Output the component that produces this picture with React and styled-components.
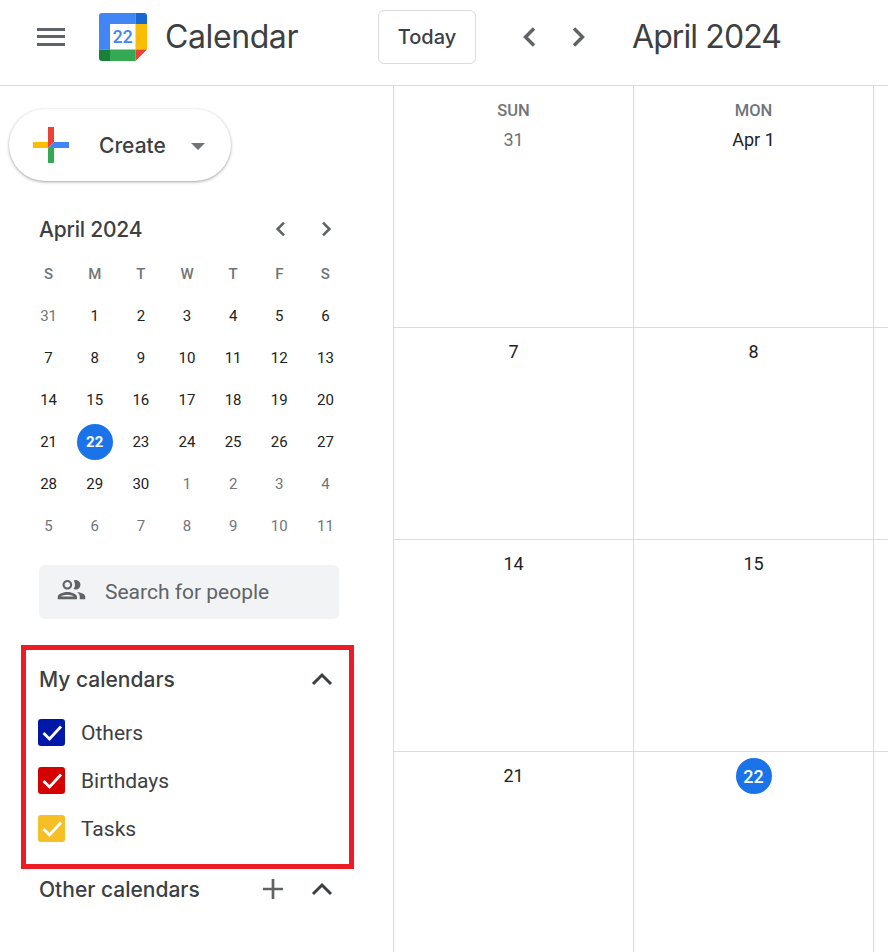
import React from "react";
import styled, { createGlobalStyle } from "styled-components";

const GlobalStyle = createGlobalStyle`
  html, body {
    margin: 0;
    padding: 0;
    background: #fff;
  }
  * {
    box-sizing: border-box;
  }
`;

const miniWeeks = [
  [[31, 1], [1], [2], [3], [4], [5], [6]],
  [[7], [8], [9], [10], [11], [12], [13]],
  [[14], [15], [16], [17], [18], [19], [20]],
  [[21], [22, 0, 1], [23], [24], [25], [26], [27]],
  [[28], [29], [30], [1, 1], [2, 1], [3, 1], [4, 1]],
  [[5, 1], [6, 1], [7, 1], [8, 1], [9, 1], [10, 1], [11, 1]]
];

const dayLetters = ["S", "M", "T", "W", "T", "F", "S"];

const calendars = [
  { name: "Others", color: "#0018a8" },
  { name: "Birthdays", color: "#d50000" },
  { name: "Tasks", color: "#f6bf26" }
];

const cells = [
  { label: "SUN", day: "31", muted: true },
  { label: "MON", day: "Apr 1" },
  {},
  { day: "7" },
  { day: "8" },
  {},
  { day: "14" },
  { day: "15" },
  {},
  { day: "21" },
  { day: "22", today: true },
  {}
];

const Logo = () => (
  <LogoSvg viewBox="0 0 48 48">
    <path d="M3 0h33.500v11H11v25.500H0V3a3 3 0 0 1 3-3z" fill="#4285f4" />
    <path d="M36.500 0H45a3 3 0 0 1 3 3v8H36.500z" fill="#1967d2" />
    <rect x="36.500" y="11" width="11.500" height="25.500" fill="#fbbc04" />
    <rect x="11" y="36.500" width="25.500" height="11.500" fill="#34a853" />
    <path d="M0 36.500h11V48H3a3 3 0 0 1-3-3z" fill="#188038" />
    <path d="M36.500 36.500H48L36.500 48z" fill="#ea4335" />
    <text x="23.700" y="29.500" textAnchor="middle" fontFamily="Roboto, sans-serif" fontSize="17.500" fontWeight="500" fill="#4285f4">22</text>
  </LogoSvg>
);

const Check = () => (
  <svg width="27" height="27" viewBox="0 0 27 27">
    <path d="M5.500 14l6 6L23 7.500" fill="none" stroke="#fff" strokeWidth="2.800" />
  </svg>
);

const UpChevron = () => (
  <svg width="22" height="14" viewBox="0 0 22 14">
    <path d="M2 12l9-9 9 9" fill="none" stroke="#3c4043" strokeWidth="3" />
  </svg>
);

// size is the height of the glyph, width follows
const SideChevron = ({ dir, size, weight }) => (
  <svg width={size} height={size} viewBox="0 0 24 24">
    <path
      d={dir === "left" ? "M16 3.500L7.500 12l8.500 8.500" : "M8 3.500L16.500 12 8 20.500"}
      fill="none"
      stroke="#5f6368"
      strokeWidth={weight}
    />
  </svg>
);

export default function App() {
  return (
    <Page>
      <GlobalStyle />
      <Header>
        <Burger>
          <span />
          <span />
          <span />
        </Burger>
        <Logo />
        <Brand>Calendar</Brand>
        <TodayButton>Today</TodayButton>
        <NavArrows>
          <SideChevron dir="left" size={24} weight={3.4} />
          <SideChevron dir="right" size={24} weight={3.4} />
        </NavArrows>
        <MonthTitle>April 2024</MonthTitle>
      </Header>
      <Body>
        <Sidebar>
          <CreateButton>
            <svg width="36" height="36" viewBox="0 0 36 36">
              <rect x="15" width="6" height="15" fill="#ea4335" />
              <rect x="21" y="15" width="15" height="6" fill="#4285f4" />
              <rect x="15" y="21" width="6" height="15" fill="#34a853" />
              <rect y="15" width="15" height="6" fill="#fbbc04" />
              <path d="M15 15h6l-6 6z" fill="#ea4335" />
              <path d="M21 15v6h-6z" fill="#4285f4" />
            </svg>
            <CreateLabel>Create</CreateLabel>
            <Caret />
          </CreateButton>
          <MiniHeader>
            <MiniTitle>April 2024</MiniTitle>
            <MiniArrows>
              <SideChevron dir="left" size={18} weight={3.4} />
              <SideChevron dir="right" size={18} weight={3.4} />
            </MiniArrows>
          </MiniHeader>
          <MiniGrid>
            {dayLetters.map((letter, i) => (
              <MiniLetter key={i}>{letter}</MiniLetter>
            ))}
            {miniWeeks.flat().map(([num, outside, selected], i) => (
              <MiniDay key={i} $outside={outside}>
                {selected ? <Selected>{num}</Selected> : num}
              </MiniDay>
            ))}
          </MiniGrid>
          <PeopleSearch>
            <PeopleIcon viewBox="0 0 24 24" fill="#5f6368">
              <path d="M9 12c1.930 0 3.500-1.570 3.500-3.500S10.930 5 9 5 5.500 6.570 5.500 8.500 7.070 12 9 12zm0-5.500c1.100 0 2 .9 2 2s-.9 2-2 2-2-.9-2-2 .9-2 2-2zM9 13.750c-2.340 0-7 1.170-7 3.500V19h14v-1.750c0-2.330-4.660-3.500-7-3.500zM4.340 17c.84-.58 2.870-1.250 4.660-1.250s3.820.67 4.660 1.250H4.340zM16.040 13.810c1.160.84 1.960 1.960 1.960 3.440V19h4v-1.750c0-2.020-3.500-3.170-5.960-3.440zM15 12c1.930 0 3.500-1.570 3.500-3.500S16.930 5 15 5c-.54 0-1.040.13-1.500.35.630.89 1 1.980 1 3.150s-.37 2.260-1 3.150c.46.22.96.35 1.500.35z" />
            </PeopleIcon>
            <PeopleText>Search for people</PeopleText>
          </PeopleSearch>
          <MyCalendars>
            <SectionHead>
              <SectionTitle>My calendars</SectionTitle>
              <UpChevron />
            </SectionHead>
            <CalendarList>
              {calendars.map(c => (
                <CalendarRow key={c.name}>
                  <CheckBox $color={c.color}>
                    <Check />
                  </CheckBox>
                  <CalendarName>{c.name}</CalendarName>
                </CalendarRow>
              ))}
            </CalendarList>
          </MyCalendars>
          <OtherHead>
            <SectionTitle>Other calendars</SectionTitle>
            <OtherActions>
              <svg width="24" height="24" viewBox="0 0 24 24">
                <path d="M12 2v20M2 12h20" stroke="#5f6368" strokeWidth="2.700" fill="none" />
              </svg>
              <UpChevron />
            </OtherActions>
          </OtherHead>
        </Sidebar>
        <Month>
          {cells.map((cell, i) => (
            <Cell key={i}>
              {cell.label && <DayLabel>{cell.label}</DayLabel>}
              {cell.today ? (
                <TodayCircle>{cell.day}</TodayCircle>
              ) : (
                cell.day && (
                  <DayNumber $muted={cell.muted} $top={!!cell.label}>
                    {cell.day}
                  </DayNumber>
                )
              )}
            </Cell>
          ))}
        </Month>
      </Body>
    </Page>
  );
}

const Page = styled.div`
  width: 888px;
  height: 952px;
  overflow: hidden;
  background: #fff;
  font-family: Roboto, "Liberation Sans", sans-serif;
  color: #3c4043;
`;

const Header = styled.header`
  height: 86px;
  display: flex;
  align-items: center;
  padding: 0 0 12px 37px;
  border-bottom: 1px solid #dadce0;
`;

const Burger = styled.div`
  width: 28px;
  height: 18px;
  margin-right: 34px;
  display: flex;
  flex-direction: column;
  justify-content: space-between;

  span {
    height: 3px;
    background: #5f6368;
  }
`;

const LogoSvg = styled.svg`
  width: 48px;
  height: 48px;
  flex: none;
  margin-right: 18px;
`;

const Brand = styled.div`
  width: 213px;
  font-family: Inter, sans-serif;
  font-size: 32px;
  font-weight: 400;
  letter-spacing: -0.4px;
  color: #3c4043;
`;

const TodayButton = styled.div`
  width: 98px;
  height: 54px;
  display: flex;
  align-items: center;
  justify-content: center;
  border: 1px solid #dadce0;
  border-radius: 6px;
  font-family: Inter, sans-serif;
  font-size: 20px;
  font-weight: 500;
  color: #3c4043;
`;

const NavArrows = styled.div`
  width: 72px;
  margin-left: 42px;
  display: flex;
  justify-content: space-between;
`;

const MonthTitle = styled.div`
  margin-left: 42px;
  font-family: Inter, sans-serif;
  font-size: 32px;
  font-weight: 400;
  letter-spacing: -0.9px;
  color: #3c4043;
`;

const Body = styled.div`
  display: flex;
`;

const Sidebar = styled.aside`
  width: 393px;
  flex: none;
  padding: 23px 0 0 9px;
`;

const CreateButton = styled.div`
  width: 222px;
  height: 72px;
  padding-left: 24px;
  display: flex;
  align-items: center;
  border-radius: 36px;
  background: #fff;
  box-shadow: 0 1px 3px 1px rgba(60, 64, 67, 0.15), 0 1px 2px rgba(60, 64, 67, 0.3);
`;

const CreateLabel = styled.div`
  width: 68px;
  margin-left: 30px;
  font-family: Inter, sans-serif;
  font-size: 21px;
  font-weight: 500;
  white-space: nowrap;
`;

const Caret = styled.div`
  margin-left: 24px;
  margin-top: 2px;
  border-left: 7px solid transparent;
  border-right: 7px solid transparent;
  border-top: 7px solid #70757a;
`;

const MiniHeader = styled.div`
  width: 296px;
  margin: 34px 0 0 30px;
  height: 28px;
  display: flex;
  align-items: center;
  justify-content: space-between;
`;

const MiniTitle = styled.div`
  font-family: Inter, sans-serif;
  font-size: 21px;
  font-weight: 500;
  letter-spacing: -0.2px;
`;

const MiniArrows = styled.div`
  width: 63px;
  display: flex;
  justify-content: space-between;
`;

const MiniGrid = styled.div`
  margin: 10px 0 0 16.500px;
  width: 324px;
  display: grid;
  grid-template-columns: repeat(7, 46.150px);
  grid-auto-rows: 42px;
`;

const MiniLetter = styled.div`
  display: flex;
  align-items: center;
  justify-content: center;
  font-size: 15px;
  font-weight: 500;
  color: #70757a;
`;

const MiniDay = styled.div`
  display: flex;
  align-items: center;
  justify-content: center;
  font-size: 15px;
  font-weight: 400;
  color: ${p => (p.$outside ? "#70757a" : "#202124")};
`;

const Selected = styled.div`
  width: 36px;
  height: 36px;
  display: flex;
  align-items: center;
  justify-content: center;
  border-radius: 50%;
  background: #1a73e8;
  color: #fff;
  font-weight: 700;
`;

const PeopleSearch = styled.div`
  width: 300px;
  height: 54px;
  margin: 18px 0 0 30px;
  padding-left: 16px;
  display: flex;
  align-items: center;
  border-radius: 6px;
  background: #f1f3f4;
`;

const PeopleIcon = styled.svg`
  width: 33px;
  height: 33px;
  flex: none;
  margin-top: -6px;
`;

const PeopleText = styled.div`
  margin-left: 17px;
  font-size: 21px;
  color: #5f6368;
`;

const MyCalendars = styled.section`
  width: 333px;
  height: 224px;
  margin: 26px 0 0 12px;
  padding: 0 16px 0 13px;
  border: 5px solid #ed1c24;
`;

const SectionHead = styled.div`
  height: 58px;
  display: flex;
  align-items: center;
  justify-content: space-between;
`;

const SectionTitle = styled.div`
  font-family: Inter, sans-serif;
  font-size: 21px;
  font-weight: 500;
  color: #3c4043;
`;

const CalendarList = styled.div`
  margin-top: 11px;
  display: flex;
  flex-direction: column;
  gap: 21px;
`;

const CalendarRow = styled.div`
  height: 27px;
  display: flex;
  align-items: center;
`;

const CheckBox = styled.div`
  width: 27px;
  height: 27px;
  margin-left: -1px;
  border-radius: 3px;
  background: ${p => p.$color};

  svg {
    display: block;
  }
`;

const CalendarName = styled.div`
  margin-left: 16px;
  font-size: 21px;
  color: #3c4043;
`;

const OtherHead = styled.div`
  width: 294px;
  height: 40px;
  margin-left: 30px;
  display: flex;
  align-items: center;
  justify-content: space-between;
`;

const OtherActions = styled.div`
  display: flex;
  align-items: center;
  gap: 26px;
`;

const Month = styled.main`
  flex: 1;
  display: grid;
  grid-template-columns: repeat(3, 240px);
  grid-template-rows: 242px repeat(3, 212px);
`;

const Cell = styled.div`
  display: flex;
  flex-direction: column;
  align-items: center;
  border-left: 1px solid #dadce0;
  border-bottom: 1px solid #dadce0;

  &:nth-last-child(-n + 3) {
    border-bottom: none;
  }
`;

const DayLabel = styled.div`
  margin-top: 16px;
  height: 18px;
  line-height: 18px;
  font-size: 16.500px;
  font-weight: 500;
  color: #70757a;
`;

const DayNumber = styled.div`
  margin-top: ${p => (p.$top ? "8px" : "12px")};
  height: 24px;
  line-height: 24px;
  font-size: 18px;
  font-weight: 400;
  color: ${p => (p.$muted ? "#70757a" : "#202124")};
`;

const TodayCircle = styled.div`
  width: 36px;
  height: 36px;
  margin-top: 6px;
  display: flex;
  align-items: center;
  justify-content: center;
  border-radius: 50%;
  background: #1a73e8;
  color: #fff;
  font-size: 18px;
  font-weight: 500;
`;
